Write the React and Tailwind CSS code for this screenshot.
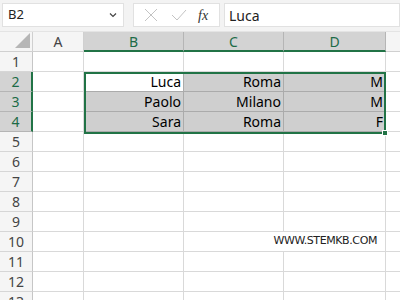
import React from "react";

const rows = [1, 2, 3, 4, 5, 6, 7, 8, 9, 10, 11, 12, 13];
const data = {
  2: ["Luca", "Roma", "M"],
  3: ["Paolo", "Milano", "M"],
  4: ["Sara", "Roma", "F"],
};

function Cell({ w, sel, active, children, noRight }) {
  const bg = sel && !active ? "bg-[#cfcfcf]" : "bg-white";
  const br = noRight ? "border-r-transparent" : sel ? "border-r-[#ababab]" : "border-r-[#d9d9d9]";
  const bb = sel ? "border-b-[#ababab]" : "border-b-[#d9d9d9]";
  return (
    <div className={`${w} h-full shrink-0 border-r border-b ${br} ${bb} ${bg} flex items-center justify-end pr-[2px] text-[14px] text-black`}>
      {children}
    </div>
  );
}

export default function App() {
  return (
    <div className="w-[400px] h-[300px] overflow-hidden bg-white" style={{ fontFamily: '"Noto Sans", "Open Sans", sans-serif' }}>
      {/* barra formula */}
      <div className="h-[32px] bg-[#f3f3f3] flex items-start pt-[3px] pl-[2px] gap-[9px] border-b border-[#e4e4e4]">
        <div className="w-[122px] h-[24px] bg-white border border-[#e1e1e1] flex items-center justify-between pl-[5px] pr-[6px]">
          <span className="text-[13px] text-[#222]">B2</span>
          <svg width="8" height="6" viewBox="0 0 8 6"><path d="M1 1.5 L4 4.5 L7 1.5" fill="none" stroke="#444" strokeWidth="1.2" /></svg>
        </div>
        <div className="w-[87px] h-[24px] bg-white border border-[#e1e1e1] flex items-center pl-[10px] gap-[13px]">
          <svg width="14" height="14" viewBox="0 0 14 14"><path d="M1 1 L13 13 M13 1 L1 13" stroke="#c3c3c3" strokeWidth="1" /></svg>
          <svg width="16" height="12" viewBox="0 0 16 12"><path d="M1 6 L6 11 L15 1" fill="none" stroke="#c3c3c3" strokeWidth="1" /></svg>
          <span className="text-[14px] italic text-[#333] -ml-[2px]" style={{ fontFamily: '"Liberation Serif", serif' }}>fx</span>
        </div>
        <div className="flex-1 h-[24px] bg-white border border-[#e1e1e1] -ml-[5px] flex items-center pl-[4px]">
          <span className="text-[14px] text-[#222]">Luca</span>
        </div>
      </div>

      {/* griglia */}
      <div className="relative">
        <div className="flex h-[20px] bg-[#f5f5f5]">
          <div className="w-[33px] h-full shrink-0 border-r border-b border-[#d0d0d0] relative">
            <svg className="absolute right-[2px] bottom-[3px]" width="15" height="15" viewBox="0 0 15 15"><path d="M15 0 L15 15 L0 15 Z" fill="#b6b6b6" /></svg>
          </div>
          <div className="w-[51px] h-full shrink-0 border-r border-b border-[#d0d0d0] flex items-center justify-center text-[14px] text-[#444]">A</div>
          {["B", "C", "D"].map((c, i) => (
            <div key={c} className={`${i === 2 ? "w-[102px]" : "w-[100px]"} h-full shrink-0 bg-[#d3d3d3] border-r border-r-[#b5b5b5] border-b-2 border-b-[#217346] flex items-center justify-center text-[14px] text-[#1d6b47]`}>{c}</div>
          ))}
          <div className="flex-1 h-full border-b border-[#d0d0d0]" />
        </div>

        {rows.map((r) => {
          const sel = r >= 2 && r <= 4;
          const vals = data[r];
          return (
            <div key={r} className="flex h-[20px]">
              <div className={`w-[33px] h-full shrink-0 flex items-center justify-center text-[14px] border-b ${sel ? "bg-[#d3d3d3] text-[#1d6b47] border-b-[#b5b5b5] border-r-2 border-r-[#217346]" : "bg-[#f5f5f5] text-[#444] border-b-[#d6d6d6] border-r border-r-[#c6c6c6]"}`}>{r}</div>
              <Cell w="w-[51px]" />
              <Cell w="w-[100px]" sel={sel} active={r === 2}>{vals && vals[0]}</Cell>
              {r === 10 ? (
                <div className="w-[202px] h-full shrink-0 border-r border-b border-[#d9d9d9] flex items-center justify-end pr-[8px] text-[11px] text-[#222]" style={{ fontFamily: '"DejaVu Sans", sans-serif', letterSpacing: "-0.4px" }}>
                  WWW.STEMKB.COM
                </div>
              ) : (
                <>
                  <Cell w="w-[100px]" sel={sel}>{vals && vals[1]}</Cell>
                  <Cell w="w-[102px]" sel={sel}>{vals && vals[2]}</Cell>
                </>
              )}
              <div className="flex-1 h-full border-b border-[#d9d9d9]" />
            </div>
          );
        })}

        {/* selezione */}
        <div className="absolute left-[84px] top-[40px] w-[302px] h-[62px] border-2 border-[#217346] pointer-events-none" />
        <div className="absolute left-[382px] top-[98px] w-[6px] h-[6px] bg-[#217346] border border-white pointer-events-none" />
      </div>
    </div>
  );
}
